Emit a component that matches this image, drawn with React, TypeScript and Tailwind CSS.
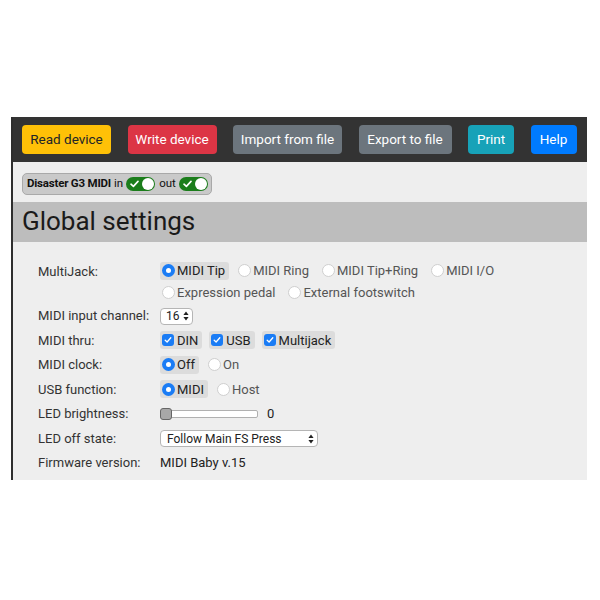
import type { ReactNode } from 'react';

const font = { fontFamily: 'Roboto, "Liberation Sans", sans-serif' };

function Radio({ on, label }: { on?: boolean; label: string }) {
  return (
    <span
      className={`inline-flex h-[18px] items-center rounded-[3px] pl-[2px] pr-[4px] ${
        on ? 'bg-[#dcdcdc] text-[#222]' : 'text-[#555]'
      }`}
    >
      {on ? (
        <span className="mr-[2px] flex h-[13px] w-[13px] items-center justify-center rounded-full bg-[#1a7cf5]">
          <span className="h-[5px] w-[5px] rounded-full bg-white" />
        </span>
      ) : (
        <span className="mr-[2px] h-[13px] w-[13px] rounded-full border border-[#cfcfcf] bg-white" />
      )}
      {label}
    </span>
  );
}

function Check({ label }: { label: string }) {
  return (
    <span className="inline-flex h-[18px] items-center rounded-[3px] bg-[#dcdcdc] pl-[2px] pr-[4px] text-[#222]">
      <span className="mr-[3px] flex h-[12px] w-[12px] items-center justify-center rounded-[3px] bg-[#1a7cf5]">
        <svg width="8" height="8" viewBox="0 0 8 8" fill="none">
          <path d="M1.2 4.2 3.1 6 6.8 1.8" stroke="white" strokeWidth="1.3" strokeLinecap="round" strokeLinejoin="round" />
        </svg>
      </span>
      {label}
    </span>
  );
}

function Toggle() {
  return (
    <span className="inline-flex h-[14px] w-[29px] items-center justify-between rounded-full bg-[#1b7d1b] pl-[4px] pr-[1px]">
      <svg width="9" height="8" viewBox="0 0 9 8" fill="none">
        <path d="M1 4.2 3.4 6.4 8 1.4" stroke="white" strokeWidth="1.6" strokeLinecap="round" strokeLinejoin="round" />
      </svg>
      <span className="h-[12px] w-[12px] rounded-full bg-white" />
    </span>
  );
}

function Row({ label, children, tall }: { label: string; children: ReactNode; tall?: boolean }) {
  return (
    <div className={`flex ${tall ? 'items-start' : 'h-[24.5px] items-center'}`}>
      <div className={`w-[122px] shrink-0 text-[#333] ${tall ? 'pt-[2px]' : ''}`}>{label}</div>
      <div className="min-w-0 flex-1">{children}</div>
    </div>
  );
}

function Btn({ children, cls }: { children: ReactNode; cls: string }) {
  return (
    <button
      type="button"
      className={`flex h-[29px] shrink-0 items-center justify-center whitespace-nowrap rounded-[4px] text-[13.5px] ${cls}`}
    >
      {children}
    </button>
  );
}

export default function App() {
  return (
    <div className="h-[600px] w-[600px] bg-white pt-[117px]" style={font}>
      <div className="ml-[11px] w-[576px] border-l-2 border-[#2e2e2e] bg-[#eeeeee]">
        <div className="flex h-[45px] items-center gap-[16.5px] bg-[#333333] pl-[9px]">
          <Btn cls="w-[89px] bg-[#ffc107] text-[#212529]">Read device</Btn>
          <Btn cls="w-[89px] bg-[#dc3545] text-white">Write device</Btn>
          <Btn cls="w-[109px] bg-[#6c757d] text-white">Import from file</Btn>
          <Btn cls="w-[93px] bg-[#6c757d] text-white">Export to file</Btn>
          <Btn cls="w-[46px] bg-[#17a2b8] text-white">Print</Btn>
          <Btn cls="w-[46px] bg-[#007bff] text-white">Help</Btn>
        </div>

        <div className="pl-[9px] pt-[8px]">
          <div className="inline-flex h-[22px] items-center gap-[3px] rounded-[5px] border border-[#a9a9a9] bg-[#c9c9c9] pl-[4px] pr-[3px] text-[11.5px] text-[#111]">
            <span className="font-bold tracking-[-0.2px]">Disaster G3 MIDI</span>
            <span>in</span>
            <Toggle />
            <span className="ml-[1px]">out</span>
            <Toggle />
          </div>
        </div>

        <div className="mt-[7px] flex h-[40px] items-center bg-[#bdbdbd] pl-[9px] text-[26px] text-[#1a1a1a]">
          Global settings
        </div>

        <div className="pb-[5px] pl-[25px] pt-[18px] text-[13px]">
          <Row label="MultiJack:" tall>
            <div className="flex h-[22px] items-center gap-[7px]">
              <Radio on label="MIDI Tip" />
              <Radio label="MIDI Ring" />
              <Radio label="MIDI Tip+Ring" />
              <Radio label="MIDI I/O" />
            </div>
            <div className="flex h-[22px] items-center gap-[7px]">
              <Radio label="Expression pedal" />
              <Radio label="External footswitch" />
            </div>
          </Row>
          <Row label="MIDI input channel:">
            <span className="inline-flex h-[17px] w-[33px] items-center justify-between rounded-[4px] border border-[#b5b5b5] bg-white pl-[5px] pr-[3px] text-[12px] text-[#222]">
              16
              <svg width="6" height="10" viewBox="0 0 6 10">
                <path d="M3 0.5 5.6 4H0.4Z M3 9.5 5.6 6H0.4Z" fill="#222" />
              </svg>
            </span>
          </Row>
          <Row label="MIDI thru:">
            <div className="flex items-center gap-[7px]">
              <Check label="DIN" />
              <Check label="USB" />
              <Check label="Multijack" />
            </div>
          </Row>
          <Row label="MIDI clock:">
            <div className="flex items-center gap-[7px]">
              <Radio on label="Off" />
              <Radio label="On" />
            </div>
          </Row>
          <Row label="USB function:">
            <div className="flex items-center gap-[7px]">
              <Radio on label="MIDI" />
              <Radio label="Host" />
            </div>
          </Row>
          <Row label="LED brightness:">
            <div className="flex items-center">
              <div className="relative flex h-[8px] w-[98px] items-center rounded-[2px] border border-[#b0b0b0] bg-white">
                <span className="absolute left-[-1px] top-[-3px] h-[12px] w-[12px] rounded-[3px] border border-[#666] bg-[#a8a8a8]" />
              </div>
              <span className="ml-[9px] text-[#222]">0</span>
            </div>
          </Row>
          <Row label="LED off state:">
            <span className="inline-flex h-[17px] w-[158px] items-center justify-between rounded-[4px] border border-[#b5b5b5] bg-white pl-[6px] pr-[3px] text-[12px] text-[#222]">
              Follow Main FS Press
              <svg width="6" height="10" viewBox="0 0 6 10">
                <path d="M3 0.5 5.6 4H0.4Z M3 9.5 5.6 6H0.4Z" fill="#222" />
              </svg>
            </span>
          </Row>
          <Row label="Firmware version:">
            <span className="text-[#222]">MIDI Baby v.15</span>
          </Row>
        </div>
      </div>
    </div>
  );
}
